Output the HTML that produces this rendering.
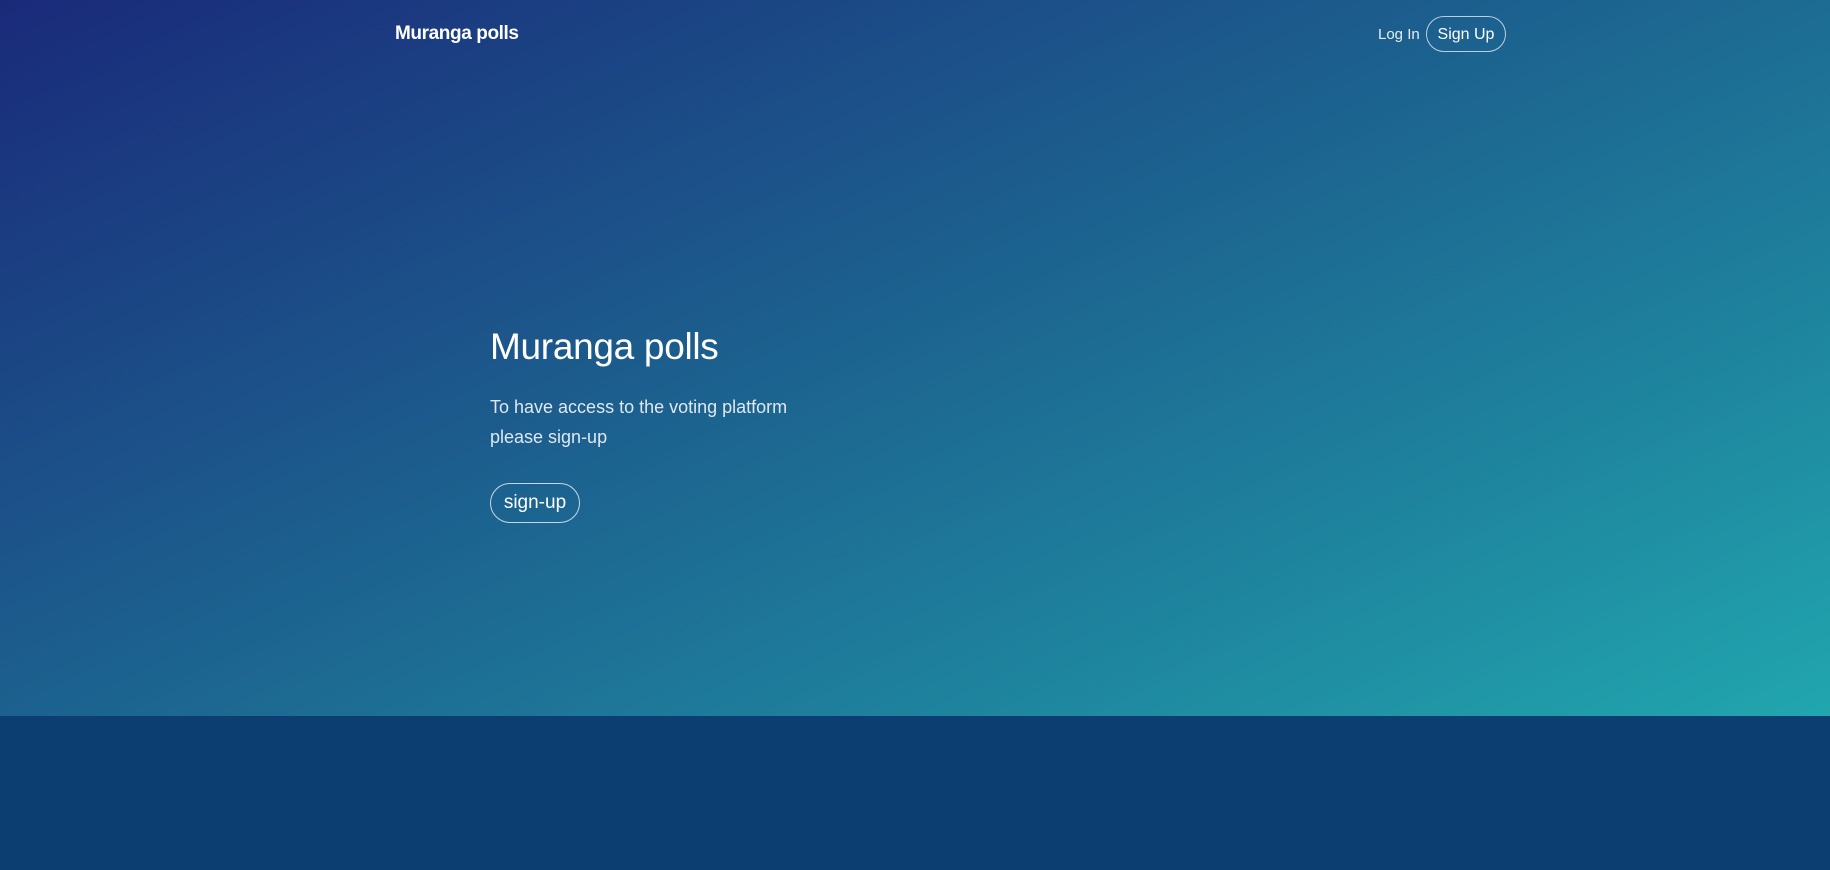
<!DOCTYPE html>
<html><head><meta charset="utf-8"><style>
*{margin:0;padding:0;box-sizing:border-box}
body{width:1830px;height:870px;overflow:hidden;background:#0c3e72;font-family:"Liberation Sans",sans-serif;color:#fff}
.hero{position:absolute;left:0;top:0;width:1830px;height:716px;background:linear-gradient(155deg,#1a2a7a 0%,#1c5a8c 40%,#1e7f9c 70%,#21a6ae 100%)}
.brand{position:absolute;left:395px;top:23px;font-size:19px;font-weight:bold;letter-spacing:-0.4px}
.login{position:absolute;left:1378px;top:26px;font-size:15px;color:#e6eef5}
.signup{position:absolute;left:1426px;top:16px;width:80px;height:36px;border:1px solid rgba(255,255,255,.7);border-radius:18px;font-size:16px;text-align:center;line-height:35px}
h1{position:absolute;left:490px;top:326px;font-size:37px;font-weight:300;letter-spacing:-0.3px}
p{position:absolute;left:490px;top:392px;font-size:18px;line-height:30px;color:#dfe8f0;font-weight:300}
.btn{position:absolute;left:490px;top:483px;width:90px;height:40px;border:1px solid rgba(255,255,255,.75);border-radius:20px;text-align:center;line-height:38px;font-size:19px}
</style></head><body>
<div class="hero">
<div class="brand">Muranga polls</div>
<div class="login">Log In</div>
<div class="signup">Sign Up</div>
<h1>Muranga polls</h1>
<p>To have access to the voting platform<br>please sign-up</p>
<div class="btn">sign-up</div>
</div>
</body></html>
